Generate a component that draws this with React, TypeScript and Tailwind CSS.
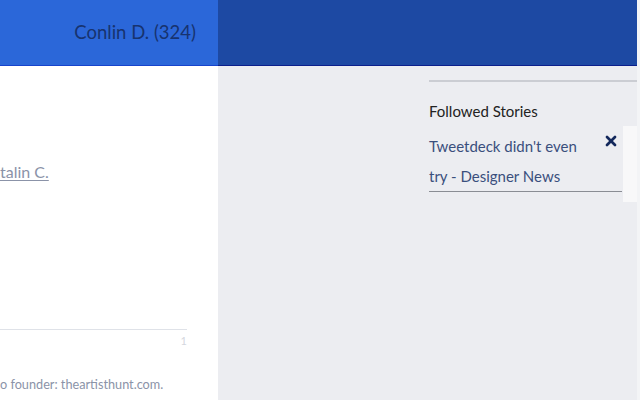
import { X } from "lucide-react";

export default function App() {
  return (
    <div className="flex h-[400px] w-[640px] overflow-hidden bg-[#ecedf1] font-['Lato',sans-serif]">
      <div className="flex w-[218px] flex-col bg-white">
        <div className="flex h-[66px] items-center justify-end border-b border-[#1743cc] bg-[#2b67d9] pr-[22px]">
          <span className="text-[18.5px] text-[#17336f]">Conlin D. (324)</span>
        </div>
        <div className="flex flex-1 flex-col pr-[31px]">
          <a className="mt-[94px] text-[16px] text-[#8b93a8] underline underline-offset-2">talin C.</a>
          <div className="mt-[145px] border-t border-[#dfe2e8]" />
          <div className="mt-[5px] text-right text-[11px] leading-none text-[#d4d7de]">1</div>
          <p className="mt-[29px] text-[12.7px] text-[#8b93a8]">o founder: theartisthunt.com.</p>
        </div>
      </div>
      <div className="flex flex-1">
        <div className="flex flex-1 flex-col">
          <div className="h-[66px] border-b border-[#0b1f8c] bg-[#1d49a3]" />
          <div className="flex flex-col pl-[211px]">
            <div className="mt-[14px] h-[2px] bg-[#cbcdd3]" />
            <h3 className="mt-[19px] text-[15px] leading-[20px] text-[#222]">Followed Stories</h3>
            <div className="mt-[5px] flex items-start">
              <div className="mt-[5px] flex w-[193px] items-start border-b border-[#8a8d94]">
                <a className="w-[160px] text-[15px] leading-[30px] text-[#3a4f7d]">
                  Tweetdeck didn't even try - Designer News
                </a>
                <X className="mt-[2px] ml-[14px] h-[16px] w-[16px] shrink-0 text-[#13285c]" strokeWidth={4} />
              </div>
              <div className="ml-[1px] h-[76px] w-[14px] bg-[#f8f8f9]" />
            </div>
          </div>
        </div>
        <div className="w-[3px] bg-[#f3f4f6]" />
      </div>
    </div>
  );
}
